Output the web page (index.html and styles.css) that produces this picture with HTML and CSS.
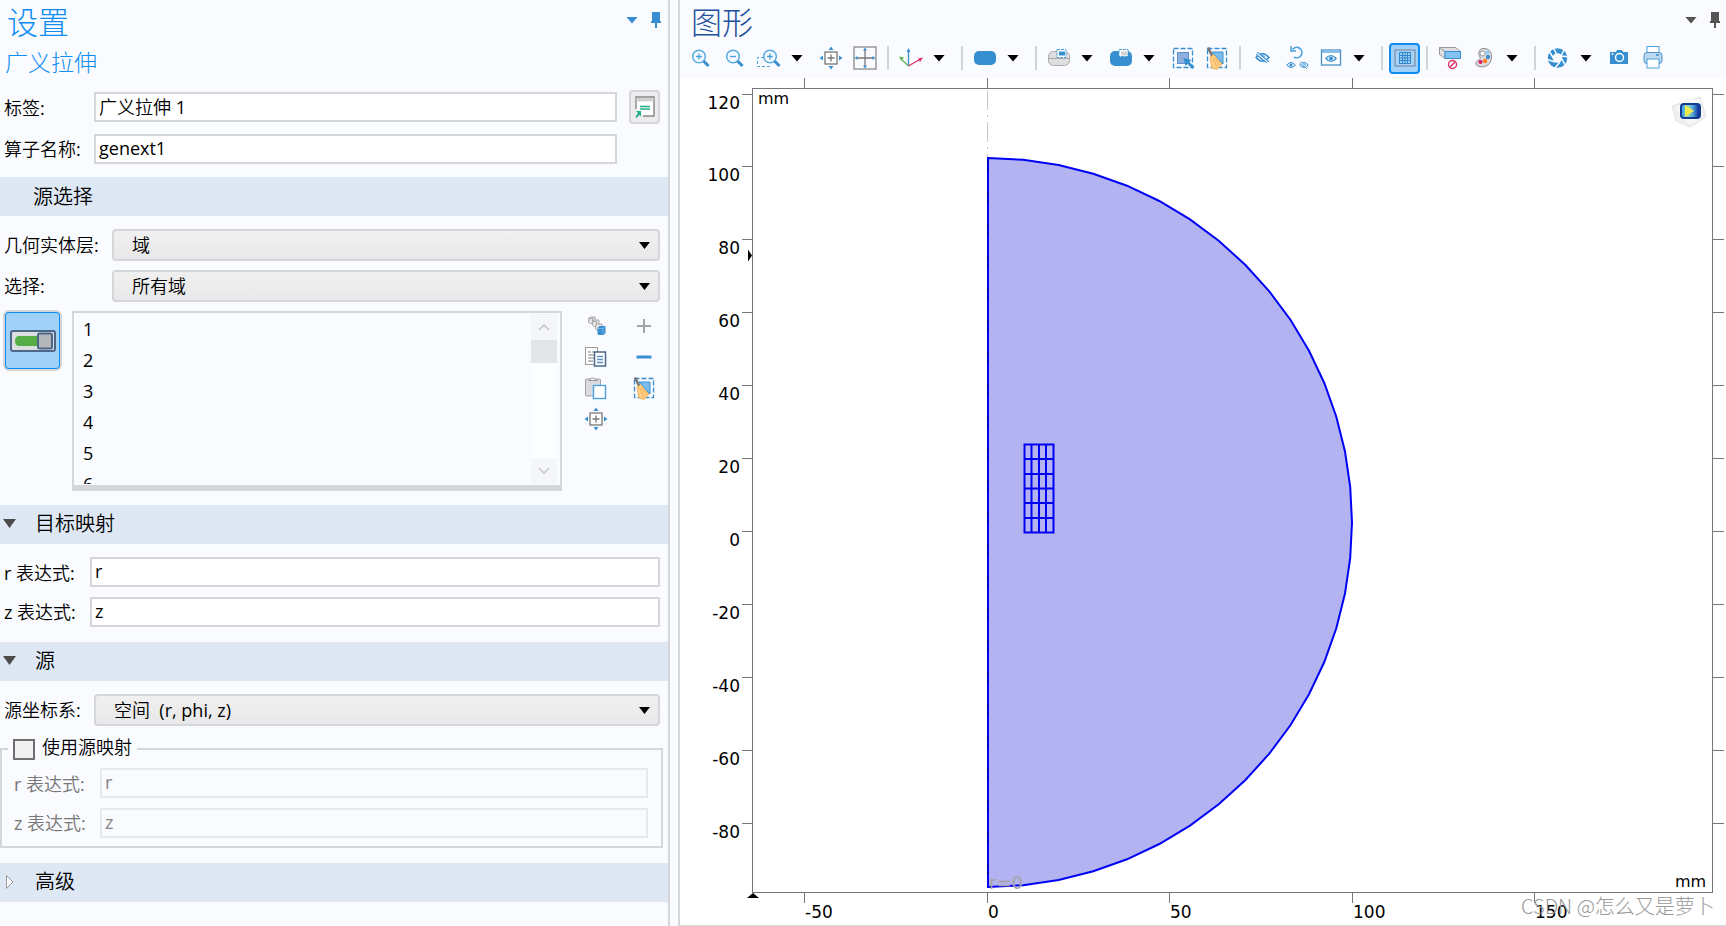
FILE: index.html
```html
<!DOCTYPE html>
<html lang="zh-CN">
<head>
<meta charset="utf-8">
<title>设置 - 图形</title>
<link rel="stylesheet" href="styles.css">
</head>
<body>
<svg class="sprite" aria-hidden="true">
  <symbol id="pin" viewBox="0 0 12 18"><path fill="currentColor" d="M2 1h8v9h1v2H7v5H5v-5H1v-2h1z"/></symbol>
  <symbol id="lens" viewBox="0 0 24 24"><circle cx="10" cy="10.500" r="6.300" fill="#f4faff" stroke="#5aaae0" stroke-width="1.500"/><path d="M14.500 15l5 5" stroke="#3a8fd0" stroke-width="3"/></symbol>
  <symbol id="pan" viewBox="0 0 24 24"><rect x="6" y="6" width="12" height="12" fill="#fff" stroke="#777" stroke-width="1.300"/><path d="M12 8.500v7M8.500 12h7" stroke="#777" stroke-width="1.300"/><path fill="#3a8fd0" d="M12 .5l2.500 3.500h-5zM12 23.500l2.500-3.500h-5zM.5 12L4 9.500v5zM23.500 12L20 9.500v5z"/></symbol>
  <symbol id="broom" viewBox="0 0 24 24"><rect x="2.500" y="2.500" width="19" height="19" fill="none" stroke="#3a8fd0" stroke-width="1.300" stroke-dasharray="5 2"/><path d="M7 6h11v12z" fill="#7cbcec" stroke="#3a8fd0"/><path d="M3 1.500l4.500 9" stroke="#777" stroke-width="2.600"/><path d="M5 11l4-2 3 4 5 5-5 5.500-5-1.500z" fill="#ffce85" stroke="#f2b25a"/><path d="M8 12l4 9M10 12l5 7" stroke="#f0aa50" stroke-width=".8"/></symbol>
  <symbol id="eye" viewBox="0 0 14 10"><path d="M1 5q6-7 12 0q-6 7-12 0z" fill="#e4f1fb" stroke="#3a8fd0" stroke-width="1.400"/><circle cx="7" cy="5" r="2.200" fill="#3a8fd0"/></symbol>
  <symbol id="eye-off" viewBox="0 0 14 10"><use href="#eye" width="14" height="10"/><path d="M1.500 1l11 8" stroke="#fafbff" stroke-width="2.500"/><path d="M2 0l11 9M1 2l10 8" stroke="#3a8fd0"/></symbol>
</svg>
<div class="app">
  <section class="settings">
    <header class="panel-head">
      <h1 class="panel-title title-blue">设置</h1>
      <div class="head-tools tools-blue">
        <button class="plain caret caret-head" aria-label="菜单"></button>
        <button class="plain" aria-label="固定"><svg width="12" height="18"><use href="#pin"/></svg></button>
      </div>
    </header>
    <h2 class="subtitle">广义拉伸</h2>

    <div class="name-row">
      <label class="label-low" for="tag">标签:</label>
      <input class="field" id="tag" type="text" value="广义拉伸 1">
      <button class="go" aria-label="转到源"><svg width="24" height="24" viewBox="0 0 24 24"><path d="M3 14V2h18v19H10" fill="#fff" stroke="#888" stroke-width="1.400"/><path d="M3.500 3h17v3.500h-17z" fill="#d2d2d4"/><path d="M7 11.500h10M7 14h10" stroke="#25ad8b" stroke-width="1.300"/><path d="M3 16h5v5.500l-1.500-1.500-3 3-1-1 2.500-4z" fill="#25ad8b"/></svg></button>
    </div>
    <div class="name-row row-second">
      <label for="op">算子名称:</label>
      <input class="field" id="op" type="text" value="genext1">
    </div>

    <h3 class="band band-plain">源选择</h3>
    <div class="form-row row-geom">
      <label for="level">几何实体层:</label>
      <div class="drop"><select id="level"><option>域</option></select></div>
    </div>
    <div class="form-row row-geom row-sel">
      <label for="choice">选择:</label>
      <div class="drop"><select id="choice"><option>所有域</option></select></div>
    </div>
    <div class="picker">
      <button class="toggle" aria-label="激活选择" aria-pressed="true"><svg width="46" height="22" viewBox="0 0 46 22"><rect x="1" y="1" width="44" height="20" rx="2" fill="#dcdfe0" stroke="#4d6789" stroke-width="2"/><path d="M8 6h19v10H8q-3-1-3-5t3-5z" fill="#55ad45"/><rect x="28" y="3.500" width="14" height="15" rx="1.500" fill="#b4b6b8" stroke="#4d6789" stroke-width="2"/></svg></button>
      <div class="list">
        <ul><li>1</li><li>2</li><li>3</li><li>4</li><li>5</li><li>6</li></ul>
        <div class="scroll">
          <button class="plain" aria-label="向上"><svg width="12" height="8"><path d="M1 7l5-5 5 5" fill="none" stroke="#c4c5c8" stroke-width="1.500"/></svg></button>
          <span class="thumb"></span>
          <button class="plain" aria-label="向下"><svg width="12" height="8"><path d="M1 1l5 5 5-5" fill="none" stroke="#c4c5c8" stroke-width="1.500"/></svg></button>
        </div>
      </div>
      <div class="actions">
        <button class="plain" aria-label="创建选择"><svg width="24" height="24" viewBox="0 0 24 24"><g fill="#e4e4e4" stroke="#aaa"><path d="M4.500 4.500l1.500-1.500h5v5L9.500 9.500H6l-1.500-1.500z"/><path d="M8.500 7.500L10 6h5v5l-1.500 1.500H10L8.500 11z"/><path d="M11.500 11.500L13 10h5v5l-1.500 1.500H13L11.500 15z"/></g><path d="M4.500 4.500h4v4M8.500 4.500L11 3M8.500 7.500h4v4" stroke="#aaa" fill="none"/><path d="M13.500 14l2-2h6v7l-2 2h-5l-1-1z" fill="#3a8fd0"/><path d="M14 14.500h5v6M19 14.500l2-2" stroke="#7fbdec" fill="none" stroke-width=".8"/></svg></button>
        <button class="plain" aria-label="添加"><svg width="24" height="24" viewBox="0 0 24 24"><path d="M12 5v14M5 12h14" stroke="#a3a4a7" stroke-width="2"/></svg></button>
        <button class="plain" aria-label="复制"><svg width="24" height="24" viewBox="0 0 24 24"><rect x="1.500" y="2.500" width="12" height="17" fill="#fff" stroke="#999"/><path d="M4 7h3M4 10h6M4 13h6M4 16h5M8 7h3" stroke="#aaa" stroke-width="1.300"/><rect x="10.500" y="7" width="11" height="14" fill="#fff" stroke="#4d6789" stroke-width="1.500"/><path d="M13 11.500h6M13 14.500h6M13 17.500h6" stroke="#5a91d0" stroke-width="1.500"/></svg></button>
        <button class="plain" aria-label="移除"><svg width="24" height="24" viewBox="0 0 24 24"><path d="M4.500 12h15" stroke="#3a8fd0" stroke-width="3"/></svg></button>
        <button class="plain" aria-label="粘贴"><svg width="24" height="24" viewBox="0 0 24 24"><rect x="1.500" y="3" width="15" height="17" rx="1" fill="#dcdcde" stroke="#a3a3a5"/><path d="M4.500 4.500q1-1 2-1 1-3 5 0 1 0 2 1z" fill="#fff" stroke="#999"/><rect x="9.500" y="9.500" width="12" height="13" fill="#fff" stroke="#4ba0dc" stroke-width="1.400"/></svg></button>
        <button class="plain" aria-label="清除选择"><svg width="24" height="24"><use href="#broom"/></svg></button>
        <button class="plain" aria-label="缩放到选择"><svg width="24" height="24"><use href="#pan"/></svg></button>
      </div>
    </div>

    <h3 class="band"><span class="caret caret-open"></span>目标映射</h3>
    <div class="form-row row-expr">
      <label class="label-low" for="r1">r 表达式:</label><input class="field" id="r1" type="text" value="r">
    </div>
    <div class="form-row row-expr row-z">
      <label for="z1">z 表达式:</label><input class="field" id="z1" type="text" value="z">
    </div>

    <h3 class="band"><span class="caret caret-open"></span>源</h3>
    <div class="form-row row-frame">
      <label for="frame">源坐标系:</label>
      <div class="drop"><select id="frame"><option>空间&nbsp; (r, phi, z)</option></select></div>
    </div>
    <fieldset class="group">
      <legend><input type="checkbox" id="use"><label for="use">使用源映射</label></legend>
      <div class="group-row"><label class="label-low" for="r2">r 表达式:</label><input class="field" id="r2" type="text" value="r" disabled></div>
      <div class="group-row"><label for="z2">z 表达式:</label><input class="field" id="z2" type="text" value="z" disabled></div>
    </fieldset>

    <h3 class="band"><svg class="closed" width="10" height="16"><path d="M1.500 1.500v13L8 8z" fill="#fff" stroke="#999"/></svg>高级</h3>
  </section>

  <div class="splitter"></div>

  <section class="graphics">
    <header class="panel-head">
      <h1 class="panel-title title-navy">图形</h1>
      <div class="head-tools tools-gray">
        <button class="plain caret caret-head" aria-label="菜单"></button>
        <button class="plain" aria-label="固定"><svg width="12" height="18"><use href="#pin"/></svg></button>
      </div>
    </header>
    <div class="toolbar">
      <button class="plain" aria-label="放大"><svg width="24" height="24" viewBox="0 0 24 24"><use href="#lens" width="24" height="24"/><path d="M7 10.500h6M10 7.500v6" stroke="#4ba0dc" stroke-width="1.300"/></svg></button>
      <button class="plain" aria-label="缩小"><svg width="24" height="24" viewBox="0 0 24 24"><use href="#lens" width="24" height="24"/><path d="M7 10.500h6" stroke="#4ba0dc" stroke-width="1.300"/></svg></button>
      <button class="plain" aria-label="框选缩放"><svg width="24" height="24" viewBox="0 0 24 24"><path d="M7 11.500H.5v9h12V18" fill="none" stroke="#4ba0dc" stroke-dasharray="3 2"/><use href="#lens" x="3" width="24" height="24"/><path d="M10 10.500h6M13 7.500v6" stroke="#4ba0dc" stroke-width="1.300"/></svg></button>
      <button class="plain caret" aria-label="缩放选项"></button>
      <button class="plain" aria-label="缩放到选择"><svg width="24" height="24"><use href="#pan"/></svg></button>
      <button class="plain" aria-label="缩放到范围"><svg width="24" height="24" viewBox="0 0 24 24"><rect x="1" y="1" width="22" height="22" fill="#fafbff" stroke="#999" stroke-width="1.500"/><path d="M12 3v18M3 12h18" stroke="#777" stroke-width="1.300"/><path fill="#3a8fd0" d="M12 1.500l2 3h-4zM12 22.500l2-3h-4zM1.500 12l3-2v4zM22.500 12l-3-2v4z"/></svg></button>
      <span class="sep"></span>
      <button class="plain" aria-label="视图"><svg width="24" height="24" viewBox="0 0 24 24"><path d="M9.500 20V4" stroke="#3a8fd0" stroke-width="1.300"/><path d="M9.500 2l2 4h-4z" fill="#3a8fd0"/><path d="M9.500 20L2 13" stroke="#5cb54e" stroke-width="1.300"/><path d="M0 10.500l5 1-3 3z" fill="#5cb54e"/><path d="M9.500 20l12-7" stroke="#dc2d66" stroke-width="1.300"/><path d="M24 11.500l-5 1 2 3.500z" fill="#dc2d66"/></svg></button>
      <button class="plain caret" aria-label="视图选项"></button>
      <span class="sep"></span>
      <button class="plain" aria-label="选择域"><svg width="24" height="24" viewBox="0 0 24 24"><rect x="1" y="5" width="22" height="14" rx="5" fill="#368fd0"/></svg></button>
      <button class="plain caret" aria-label="选择层"></button>
      <span class="sep"></span>
      <button class="plain" aria-label="选择框"><svg width="24" height="24" viewBox="0 0 24 24"><rect x="1.500" y="5.500" width="21" height="14" rx="5" fill="#dedee0" stroke="#aaa"/><path d="M1.500 12.500h21" stroke="#aaa"/><rect x="10" y="3.500" width="9" height="8" fill="#fff" stroke="#4ba0dc" stroke-dasharray="3 1"/><rect x="12" y="5.500" width="6" height="4" fill="#368fd0"/></svg></button>
      <button class="plain caret" aria-label="选择框选项"></button>
      <button class="plain" aria-label="取消选择框"><svg width="24" height="24" viewBox="0 0 24 24"><rect x="1" y="5" width="22" height="15" rx="5" fill="#368fd0"/><rect x="10" y="3.500" width="9" height="7" fill="#fff" stroke="#4ba0dc" stroke-dasharray="3 1"/><rect x="12" y="5.500" width="6" height="4" fill="#d2d2d4"/></svg></button>
      <button class="plain caret" aria-label="取消选择框选项"></button>
      <button class="plain" aria-label="选择全部"><svg width="24" height="24" viewBox="0 0 24 24"><rect x="2.500" y="2.500" width="19" height="19" fill="none" stroke="#3a8fd0" stroke-width="1.300" stroke-dasharray="5 2"/><rect x="6.500" y="6.500" width="11" height="11" fill="#8fb0dd" stroke="#5a91d0"/><path d="M12.500 12l8 2-2 2 5 5-2 2-5-5-2 2z" fill="#368fd0"/></svg></button>
      <button class="plain" aria-label="清除选择"><svg width="24" height="24"><use href="#broom"/></svg></button>
      <span class="sep"></span>
      <button class="plain" aria-label="隐藏"><svg width="24" height="24" viewBox="0 0 24 24"><use href="#eye-off" x="4" y="6" width="15" height="11"/></svg></button>
      <button class="plain" aria-label="重置隐藏"><svg width="24" height="24" viewBox="0 0 24 24"><path d="M7.500 3.500A5.200 5.200 0 1 1 9 11" fill="none" stroke="#4ba0dc" stroke-width="1.600"/><path d="M6 0v5h5" fill="none" stroke="#4ba0dc" stroke-width="1.500"/><use href="#eye" x="1" y="15" width="10" height="8"/><use href="#eye-off" x="14" y="15" width="10" height="8"/></svg></button>
      <button class="plain" aria-label="视图隐藏"><svg width="24" height="24" viewBox="0 0 24 24"><rect x="2.500" y="4" width="19" height="15" fill="#fff" stroke="#4b8fc8" stroke-width="1.300"/><path d="M2 6h20" stroke="#4ba0dc" stroke-width="1.300"/><use href="#eye" x="6" y="8" width="12" height="9"/></svg></button>
      <button class="plain caret" aria-label="隐藏选项"></button>
      <span class="sep"></span>
      <button class="grid-on" aria-label="显示栅格" aria-pressed="true"><svg width="24" height="24" viewBox="0 0 24 24"><rect x="2" y="4" width="20" height="16" fill="#a6d2f5" stroke="#8193a8" stroke-width="1.300"/><path d="M6.500 6.500h11v11h-11zM6.500 9.500h11M6.500 12h11M6.500 14.500h11M9.500 6v12M12 6v12M14.500 6v12" fill="none" stroke="#2f86cf"/></svg></button>
      <span class="sep"></span>
      <button class="plain" aria-label="场景光"><svg width="24" height="24" viewBox="0 0 24 24"><path d="M1.500 1.500h16l5 4v7H7l-5.500-4z" fill="#dedee0" stroke="#999"/><path d="M1.500 1.500l5.500 4v7" fill="none" stroke="#999"/><rect x="7" y="5.500" width="15.500" height="7" fill="#82c3f2" stroke="#3a8fd0"/><circle cx="14.500" cy="18.500" r="4" fill="#fff" stroke="#dc2d66" stroke-width="1.400"/><path d="M12 21l5-5" stroke="#dc2d66" stroke-width="1.400"/></svg></button>
      <button class="plain" aria-label="颜色"><svg width="24" height="24" viewBox="0 0 24 24"><path d="M7 6q1-4 6-3.500 6 1 6.500 7T16 19q-4 3-9 1.500-4-1-3-4 1-2 3-2.500 2-1 1-3-2-2-1-5z" fill="#dedcdc" stroke="#8f8f91"/><circle cx="10.500" cy="7.500" r="2.500" fill="#fff" stroke="#999"/><circle cx="15.500" cy="6.500" r="2" fill="#90ccf5"/><circle cx="16" cy="11" r="2.200" fill="#3a8fd0"/><circle cx="13" cy="15" r="2.200" fill="#ff7c22"/><circle cx="8.500" cy="16" r="2" fill="#dc1464"/></svg></button>
      <button class="plain caret" aria-label="颜色选项"></button>
      <span class="sep"></span>
      <button class="plain" aria-label="图像"><svg width="24" height="24" viewBox="0 0 24 24"><circle cx="11.500" cy="12" r="7.300" fill="none" stroke="#368fd0" stroke-width="5"/><path d="M7 1l4 8M19 2l-4 8M24 11l-9-1M20 21l-4-8M8 23l6-7M0 13l9 3M3 5l5 8" stroke="#fafbff" stroke-width="1.500"/></svg></button>
      <button class="plain caret" aria-label="图像选项"></button>
      <button class="plain" aria-label="快照"><svg width="24" height="24" viewBox="0 0 24 24"><path d="M2 6h6l1-2h5l1 2h5v12H2z" fill="#368fd0"/><circle cx="11.500" cy="11.500" r="4" fill="none" stroke="#fff" stroke-width="1.500"/><circle cx="4.500" cy="8" r="1" fill="#fff"/></svg></button>
      <button class="plain" aria-label="打印"><svg width="24" height="24" viewBox="0 0 24 24"><rect x="5" y=".5" width="12" height="8" fill="#fff" stroke="#4ba0dc"/><rect x="2" y="6.500" width="18" height="11" rx="3" fill="#bdd9f2" stroke="#4b8fc8"/><rect x="5" y="13" width="12" height="9" fill="#fff" stroke="#4ba0dc"/><path d="M14 9h3" stroke="#368fd0" stroke-width="1.500"/></svg></button>
    </div>
    <svg class="plot" viewBox="680 78 1046 847" role="img" aria-label="几何">
      <defs>
        <linearGradient id="logo-core"><stop offset="0" stop-color="#3fa5e0"/><stop offset=".4" stop-color="#8fd9c0"/><stop offset=".7" stop-color="#4fa0d4"/><stop offset="1" stop-color="#123fa5"/></linearGradient>
      </defs>
      <path class="axis" d="M804.500 78v10M987.500 78v10M1169.500 78v10M1352.500 78v10M1534.500 78v10M804.500 893v10M987.500 893v10M1169.500 893v10M1352.500 893v10M1534.500 893v10"/>
      <path class="axis" d="M742 94.500h10M742 166.500h10M742 239.500h10M742 312.500h10M742 385.500h10M742 458.500h10M742 531.500h10M742 604.500h10M742 677.500h10M742 750.500h10M742 823.500h10"/>
      <path class="axis" d="M1713 94.500h11M1713 166.500h11M1713 239.500h11M1713 312.500h11M1713 385.500h11M1713 458.500h11M1713 531.500h11M1713 604.500h11M1713 677.500h11M1713 750.500h11M1713 823.500h11"/>
      <path d="M987.500 90v68" stroke="#c4c4c4" stroke-dasharray="20 5 2 5"/>
      <polygon class="domain" points="988,158 1023.2,159.8 1058.6,165 1093.3,173.7 1127,185.7 1159.3,201 1190,219.4 1218.7,240.7 1245.2,264.8 1269.3,291.3 1290.6,320 1309,350.7 1324.3,383 1336.3,416.7 1345,451.4 1350.2,486.8 1352,522.5 1350.2,558.2 1345,593.6 1336.3,628.3 1324.3,662 1309,694.3 1290.6,725 1269.3,753.7 1245.2,780.2 1218.7,804.3 1190,825.6 1159.3,844 1127,859.3 1093.3,871.3 1058.6,880 1023.2,885.2 988,887"/>
      <path d="M987.500 160v726" stroke="#000090" stroke-dasharray="4 3 4 21"/>
      <path class="mesh" d="M1024.500 444.500h29v88h-29zM1024 459h29M1024 474h29M1024 488.500h29M1024 503h29M1024 518h29M1031.500 444.500v88M1039 444.500v88M1046 444.500v88"/>
      <rect class="axis" x="752.500" y="88.500" width="960" height="804"/>
      <path d="M748 249.500v12l4-6zM747 898l6-5 6 5z"/>
      <g class="tick-y">
        <text x="740" y="109">120</text><text x="740" y="181">100</text><text x="740" y="254">80</text><text x="740" y="327">60</text><text x="740" y="400">40</text><text x="740" y="473">20</text><text x="740" y="546">0</text><text x="740" y="619">-20</text><text x="740" y="692">-40</text><text x="740" y="765">-60</text><text x="740" y="838">-80</text>
      </g>
      <g class="tick-x">
        <text x="805" y="918">-50</text><text x="988" y="918">0</text><text x="1170" y="918">50</text><text x="1353" y="918">100</text><text x="1535" y="918">150</text>
      </g>
      <text class="unit" x="758" y="104">mm</text>
      <text class="unit" x="1675" y="887">mm</text>
      <text class="axis-name" x="989" y="889">r=0</text>
      <path d="M1672 106l28-9 6 20-16 10-14-6z" fill="#f0f0f2" stroke="#e4e4e6"/>
      <path d="M1676 109l8-10 16 0 3 18-14 7z" fill="#f8f8f8"/>
      <rect x="1680" y="103" width="21" height="16" rx="4" fill="#123b96"/>
      <rect x="1682" y="105" width="16" height="12" rx="2" fill="url(#logo-core)"/>
      <path d="M1685 105l9 6-9 6z" fill="#f0eb4d"/>
      <text class="mark" x="1521" y="914">CSDN @怎么又是萝卜</text>
    </svg>
  </section>
</div>
</body>
</html>
```
FILE: styles.css
```css
* { box-sizing: border-box; }
body {
  margin: 0;
  background: #fafbff;
  color: #000;
  font: 18px/24px "Open Sans", "Noto Sans CJK SC DemiLight", "Noto Sans CJK SC", sans-serif;
}
h1, h2, h3, ul { margin: 0; padding: 0; font-weight: 400; }
input, select, button { margin: 0; font: inherit; color: inherit; }
svg { display: block; overflow: visible; }
.sprite { position: absolute; width: 0; height: 0; }

.app {
  display: grid;
  grid-template-columns: minmax(480px, 670fr) 8px minmax(0, 1048fr);
  min-height: 100vh;
}
.settings { border-right: 2px solid #d5d6d9; }
.graphics {
  display: flex;
  flex-direction: column;
  border-left: 2px solid #d5d6d9;
  border-bottom: 1px solid #d5d6d9;
}

.panel-head {
  display: flex;
  justify-content: space-between;
  height: 40px;
  padding: 3px 6px 0 7px;
}
.graphics .panel-head { padding-right: 5px; padding-left: 11px; }
.panel-title {
  font: 300 31px/36px "Noto Sans CJK SC", sans-serif;
}
.title-blue, .subtitle { color: #0f8df3; }
.title-navy { color: #204f9c; }
.head-tools { display: flex; align-items: center; gap: 12px; height: 34px; }
.tools-blue { color: #368fd0; }
.tools-gray { color: #555; }
.subtitle {
  padding-left: 5px;
  font: 300 23px/42px "Noto Sans CJK SC", sans-serif;
}

.plain { padding: 0; border: 0; background: none; }
.caret { display: inline-block; width: 12px; height: 7px; background: #000; clip-path: polygon(0 0, 100% 0, 50% 100%); }
.caret-head { background: currentColor; }

.field {
  flex: 1;
  min-width: 0;
  height: 30px;
  padding: 0 3px 2px;
  border: 2px solid #d5d6d9;
  background: #fff;
}
.field:disabled { border-color: #e8e9ec; background: #fafbff; color: #838383; }
.label-low { padding-top: 2px; }

.name-row {
  display: grid;
  grid-template-columns: 90px 1fr 31px;
  align-items: center;
  height: 34px;
  margin-top: 8px;
  padding: 0 8px 0 4px;
}
.name-row .field { margin-right: 12px; }
.row-second { height: 30px; margin: 10px 0 13px; }
.go {
  display: grid;
  place-items: center;
  height: 34px;
  padding: 0;
  border: 2px solid #d5d6d9;
  border-radius: 4px;
  background: #ececed;
}

.band {
  display: flex;
  align-items: center;
  height: 39px;
  padding: 0 0 2px 3px;
  background: #dee8f4;
  font-size: 20px;
}
.band-plain { padding: 0 0 0 33px; }
.caret-open { width: 13px; height: 9px; margin-right: 19px; background: #4b4b4b; }
.closed { margin: 0 20px 0 2px; }

.form-row { display: flex; align-items: center; padding: 0 8px 0 4px; }
.row-geom { margin-top: 13px; }
.row-geom label { width: 108px; }
.row-sel { margin-top: 9px; }
.row-expr { margin-top: 13px; }
.row-expr label { width: 86px; }
.row-z { margin: 10px 0 15px; }
.row-frame { margin-top: 13px; }
.row-frame label { width: 90px; }

.drop { position: relative; flex: 1; }
.drop::after {
  content: "";
  position: absolute;
  top: 13px;
  right: 10px;
  width: 11px;
  height: 7px;
  background: #000;
  clip-path: polygon(0 0, 100% 0, 50% 100%);
  pointer-events: none;
}
select {
  display: block;
  appearance: none;
  width: 100%;
  height: 32px;
  padding: 0 30px 0 18px;
  border: 2px solid #d5d6d9;
  border-radius: 4px;
  background: linear-gradient(#f0f0f0, #e8e8e8);
}

.picker {
  display: flex;
  align-items: flex-start;
  margin: 9px 0 14px;
  padding: 0 12px 0 4px;
}
.toggle {
  display: grid;
  place-items: center;
  width: 57px;
  height: 59px;
  padding: 0;
  border: 2px solid #0f8df3;
  border-radius: 5px;
  outline: 2px solid #d5d6d9;
  outline-offset: -1px;
  background: #9fd1f9;
}
.list {
  display: flex;
  flex: 1;
  justify-content: space-between;
  height: 180px;
  margin-left: 11px;
  padding: 1px 3px 1px 9px;
  border: 2px solid #d5d6d9;
  border-bottom-width: 6px;
}
.list ul { height: 170px; overflow: hidden; list-style: none; line-height: 31px; }
.scroll {
  display: flex;
  flex-direction: column;
  width: 26px;
  height: 170px;
  background: #fcfdff;
}
.scroll .plain { display: grid; place-items: center; height: 26px; background: #f5f6f9; }
.thumb { height: 23px; margin-bottom: auto; background: #e4e5e8; }
.actions {
  display: grid;
  grid-template-columns: 24px 24px;
  column-gap: 24px;
  row-gap: 7px;
  margin: 3px 0 0 22px;
}

.group {
  margin: 11px 5px 15px 0;
  padding: 7px 13px 8px 12px;
  border: 2px solid #d5d6d9;
}
.group legend {
  display: flex;
  align-items: center;
  gap: 7px;
  height: 24px;
  margin-left: -6px;
  padding: 0 5px;
}
.group legend label { padding-bottom: 4px; }
.group input[type="checkbox"] {
  appearance: none;
  width: 22px;
  height: 21px;
  border: 2px solid #707070;
  background: #f0f0f0;
}
.group-row { display: flex; align-items: center; color: #767676; }
.group-row label { width: 86px; }
.group-row + .group-row { margin-top: 10px; }

.toolbar {
  display: flex;
  align-items: center;
  gap: 10px;
  height: 38px;
  padding: 0 0 2px 9px;
}
.toolbar .plain { flex: none; }
.toolbar .caret { margin-right: 6px; }
.sep { flex: none; width: 2px; height: 24px; background: #d2d3d6; }
.grid-on {
  display: grid;
  flex: none;
  place-items: center;
  width: 31px;
  height: 31px;
  margin: 0 -4px;
  padding: 0;
  border: 2px solid #0f8df3;
  border-radius: 4px;
  background: #9fd1f9;
}

.plot {
  flex: 1;
  width: 100%;
  min-height: 0;
  background: #fff;
  font-family: "DejaVu Sans", sans-serif;
}
.axis { fill: none; stroke: #777; }
.domain { fill: #b3b3f2; stroke: #0000f4; stroke-width: 2; }
.mesh { fill: none; stroke: #0000f4; stroke-width: 2px; }
.tick-y, .tick-x { font-size: 17px; }
.tick-y { text-anchor: end; }
.unit { font-size: 16px; }
.axis-name { font-size: 18px; fill: #a3a3a3; }
.mark { font: 300 20px "Noto Sans CJK SC", sans-serif; fill: #999; }
```
